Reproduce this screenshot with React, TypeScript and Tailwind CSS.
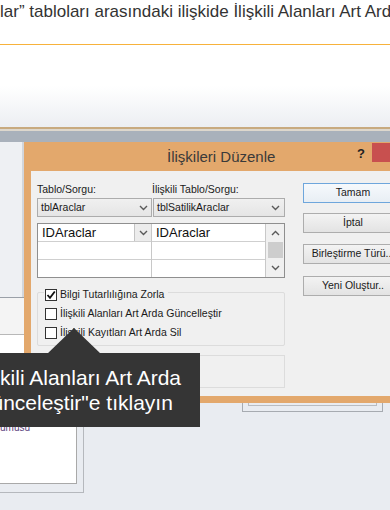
import React from "react";

const F = { fontFamily: '"Liberation Sans", Arial, sans-serif' };

function Chevron({ up = false, className = "" }: { up?: boolean; className?: string }) {
  return (
    <svg width="9" height="6" viewBox="0 0 9 6" className={className}>
      <polyline
        points={up ? "1,5 4.5,1.5 8,5" : "1,1 4.5,4.5 8,1"}
        fill="none"
        stroke="#5a5a5a"
        strokeWidth="1.4"
      />
    </svg>
  );
}

function Checkbox({ checked = false }: { checked?: boolean }) {
  return (
    <span className="w-[12px] h-[12px] border border-[#333333] bg-white flex items-center justify-center shrink-0">
      {checked && (
        <svg width="10" height="10" viewBox="0 0 10 10">
          <polyline points="1.5,5 4,7.8 8.8,1.5" fill="none" stroke="#111" strokeWidth="1.8" />
        </svg>
      )}
    </span>
  );
}

function Btn({ label, primary = false, mt }: { label: string; primary?: boolean; mt: string }) {
  return (
    <div
      className={`${mt} w-[100px] h-[20px] flex items-center justify-center text-[10.5px] text-[#1a1a1a] border ${
        primary
          ? "border-[#6ea6dc] bg-[linear-gradient(#f6f9fc,#e8eef4)]"
          : "border-[#adadad] bg-[linear-gradient(#f3f3f3,#e3e3e3)]"
      }`}
    >
      {label}
    </div>
  );
}

export default function App() {
  return (
    <div className="relative w-[390px] h-[510px] overflow-hidden bg-white" style={F}>
      {/* article text */}
      <div className="h-[44px] bg-white whitespace-nowrap overflow-hidden">
        <div className="pt-[2px] text-[17px] leading-[20px] text-[#333333]">
          lar” tabloları arasındaki ilişkide İlişkili Alanları Art Arda Güncelleştir
        </div>
      </div>
      <div className="h-[1px] bg-[#f7b23b]" />

      {/* screenshot */}
      <div className="h-[82px] bg-[linear-gradient(to_bottom,#ffffff_50%,#eceef2)]" />
      <div className="h-[2px] bg-[#c8aa80]" />
      <div className="h-[2px] bg-[#ddd7cd]" />
      <div className="h-[11px] bg-[#a9b1bb]" />

      <div className="flex h-[368px] bg-[#e9ecf1]">
        {/* left behind-window column */}
        <div className="w-[84px] flex flex-col">
          <div className="h-[155px] w-[24px] bg-[#eef0f3] border-r-2 border-[#d2d6dc]" />
          <div className="h-[1px] w-[24px] bg-[#9aa0a8]" />
          <div className="h-[37px] w-[24px] bg-[#f4f4f4] border-b border-[#b8b8b8]" />
          <div className="h-[158px] w-[84px] pb-[8px] pr-[6px] border-r border-b border-[#b5b8bd]">
            <div className="h-full w-full bg-white border-r border-b border-[#a9a9a9] flex flex-col justify-end">
              <div className="pb-[49px] text-[10px] leading-[12px] text-[#5b3f7e]">ümüsü</div>
            </div>
          </div>
        </div>
        {/* right behind area */}
        <div className="flex-1 pt-[261px] pl-[158px]">
          <div className="w-[141px] h-[9px] border-l border-r border-b border-[#a7abb1] px-[5px]">
            <div className="h-[3px] border-l border-r border-b border-[#b9bcc1]" />
          </div>
        </div>
      </div>

      {/* dialog */}
      <div className="absolute left-[24px] top-[142px] w-[380px] h-[261px] bg-[#e3a86c] flex flex-col">
        <div className="h-[29px] flex items-start shrink-0">
          <div className="w-[333px] pl-[143px] pt-[6px] text-[15px] leading-[18px] text-[#3a3a3a] whitespace-nowrap">
            İlişkileri Düzenle
          </div>
          <div className="w-[15px] pt-[4px] text-[13px] font-bold leading-[16px] text-[#222]">?</div>
          <div className="mt-[1px] h-[19px] flex-1 bg-[#c8504f]" />
        </div>
        <div className="ml-[7px] h-[225px] bg-[#f0f0f0] flex pl-[6px] pt-[10px] text-[10.5px] text-[#1a1a1a]">
          {/* left column */}
          <div className="w-[248px] flex flex-col">
            <div className="h-[17px] flex items-center whitespace-nowrap">
              <span className="w-[115px]">Tablo/Sorgu:</span>
              <span>İlişkili Tablo/Sorgu:</span>
            </div>
            <div className="h-[19px] flex">
              <div className="w-[115px] border border-[#acacac] bg-[linear-gradient(#f0f0f0,#e5e5e5)] flex items-center justify-between pl-[3px] pr-[3px]">
                <span>tblAraclar</span>
                <Chevron />
              </div>
              <div className="ml-[1px] w-[132px] border border-[#acacac] bg-[linear-gradient(#f0f0f0,#e5e5e5)] flex items-center justify-between pl-[3px] pr-[4px]">
                <span>tblSatilikAraclar</span>
                <Chevron />
              </div>
            </div>
            <div className="mt-[6px] h-[55px] border border-[#8f8f8f] bg-white flex">
              <div className="w-[114px] border-r border-[#c8c8c8] flex flex-col">
                <div className="h-[18px] border-b border-[#cfcfcf] flex items-center justify-between pl-[4px]">
                  <span className="text-[13px] leading-[16px] text-[#111]">IDAraclar</span>
                  <span className="h-[17px] w-[17px] border-l border-[#c4c4c4] bg-[#ececec] flex items-center justify-center">
                    <Chevron />
                  </span>
                </div>
                <div className="h-[18px] border-b border-[#cfcfcf]" />
                <div className="flex-1" />
              </div>
              <div className="w-[114px] border-r border-[#c8c8c8] flex flex-col">
                <div className="h-[18px] border-b border-[#cfcfcf] flex items-center pl-[4px]">
                  <span className="text-[13px] leading-[16px] text-[#111]">IDAraclar</span>
                </div>
                <div className="h-[18px] border-b border-[#cfcfcf]" />
                <div className="flex-1" />
              </div>
              <div className="flex-1 bg-[#f0f0f0] flex flex-col items-center">
                <div className="h-[18px] flex items-center">
                  <Chevron up />
                </div>
                <div className="h-[16px] w-[15px] bg-[#cdcdcd]" />
                <div className="flex-1 flex items-center">
                  <Chevron />
                </div>
              </div>
            </div>
            <div className="mt-[14px] h-[54px] border border-[#dcdcdc] rounded-[2px] flex flex-col pl-[6px]">
              <div className="-mt-[8px] h-[19px] flex items-center">
                <span className="flex items-center gap-[3px] bg-[#f0f0f0] pl-[1px] pr-[4px] whitespace-nowrap">
                  <Checkbox checked />
                  <span>Bilgi Tutarlılığına Zorla</span>
                </span>
              </div>
              <div className="h-[19px] flex items-center gap-[3px] pl-[1px] whitespace-nowrap">
                <Checkbox />
                <span>İlişkili Alanları Art Arda Güncelleştir</span>
              </div>
              <div className="h-[19px] flex items-center gap-[3px] pl-[1px] whitespace-nowrap">
                <Checkbox />
                <span>İlişkili Kayıtları Art Arda Sil</span>
              </div>
            </div>
            <div className="mt-[9px] h-[33px] border border-[#dcdcdc]" />
          </div>
          {/* buttons */}
          <div className="ml-[18px] flex flex-col whitespace-nowrap">
            <Btn label="Tamam" primary mt="mt-[2px]" />
            <Btn label="İptal" mt="mt-[10px]" />
            <Btn label="Birleştirme Türü..." mt="mt-[11px]" />
            <Btn label="Yeni Oluştur.." mt="mt-[12px]" />
          </div>
        </div>
      </div>

      {/* tooltip */}
      <div className="absolute left-[47px] top-[328px] w-0 h-0 border-l-[27px] border-r-[27px] border-b-[26px] border-l-transparent border-r-transparent border-b-[#353535]" />
      <div className="absolute left-[-52px] top-[353px] w-[252px] h-[74px] bg-[#353535] text-white text-[21px] leading-[25px] text-center pt-[12px] whitespace-nowrap">
        <div>"İlişkili Alanları Art Arda</div>
        <div>Günceleştir"e tıklayın</div>
      </div>
    </div>
  );
}
